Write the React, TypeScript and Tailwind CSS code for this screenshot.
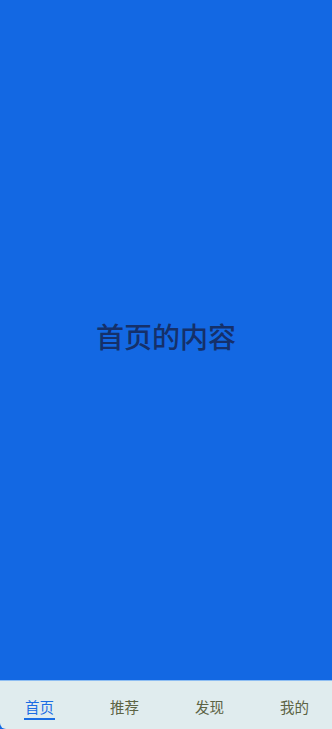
import { useState } from 'react';

const tabs = ['首页', '推荐', '发现', '我的'];

export default function App() {
  const [active, setActive] = useState(0);

  return (
    <div
      className="flex h-[729px] w-[332px] flex-col bg-[#1368e3]"
      style={{ fontFamily: '"Noto Sans CJK SC", "Noto Sans", sans-serif' }}
    >
      <main className="flex flex-1 items-center justify-center pb-[8px]">
        <h1 className="text-[28px] font-medium leading-none text-[#15306a]">{tabs[active]}的内容</h1>
      </main>

      <nav className="flex h-[49px] items-start overflow-hidden rounded-bl-[6px] border-t border-[#8dbdf2] bg-[#e0ecee] pl-[24px] pt-[19px]">
        {tabs.map((tab, i) => (
          <button
            key={tab}
            type="button"
            onClick={() => setActive(i)}
            className={`flex w-[85px] shrink-0 flex-col items-start text-[14.5px] leading-none ${
              i === active ? 'text-[#1a6de3]' : 'text-[#5c6344]'
            }`}
          >
            <span className="flex flex-col items-center">
              <span className="px-[1px]">{tab}</span>
              {i === active && <span className="mt-[3px] h-[2px] w-[31px] bg-[#1a6de3]" />}
            </span>
          </button>
        ))}
      </nav>
    </div>
  );
}
